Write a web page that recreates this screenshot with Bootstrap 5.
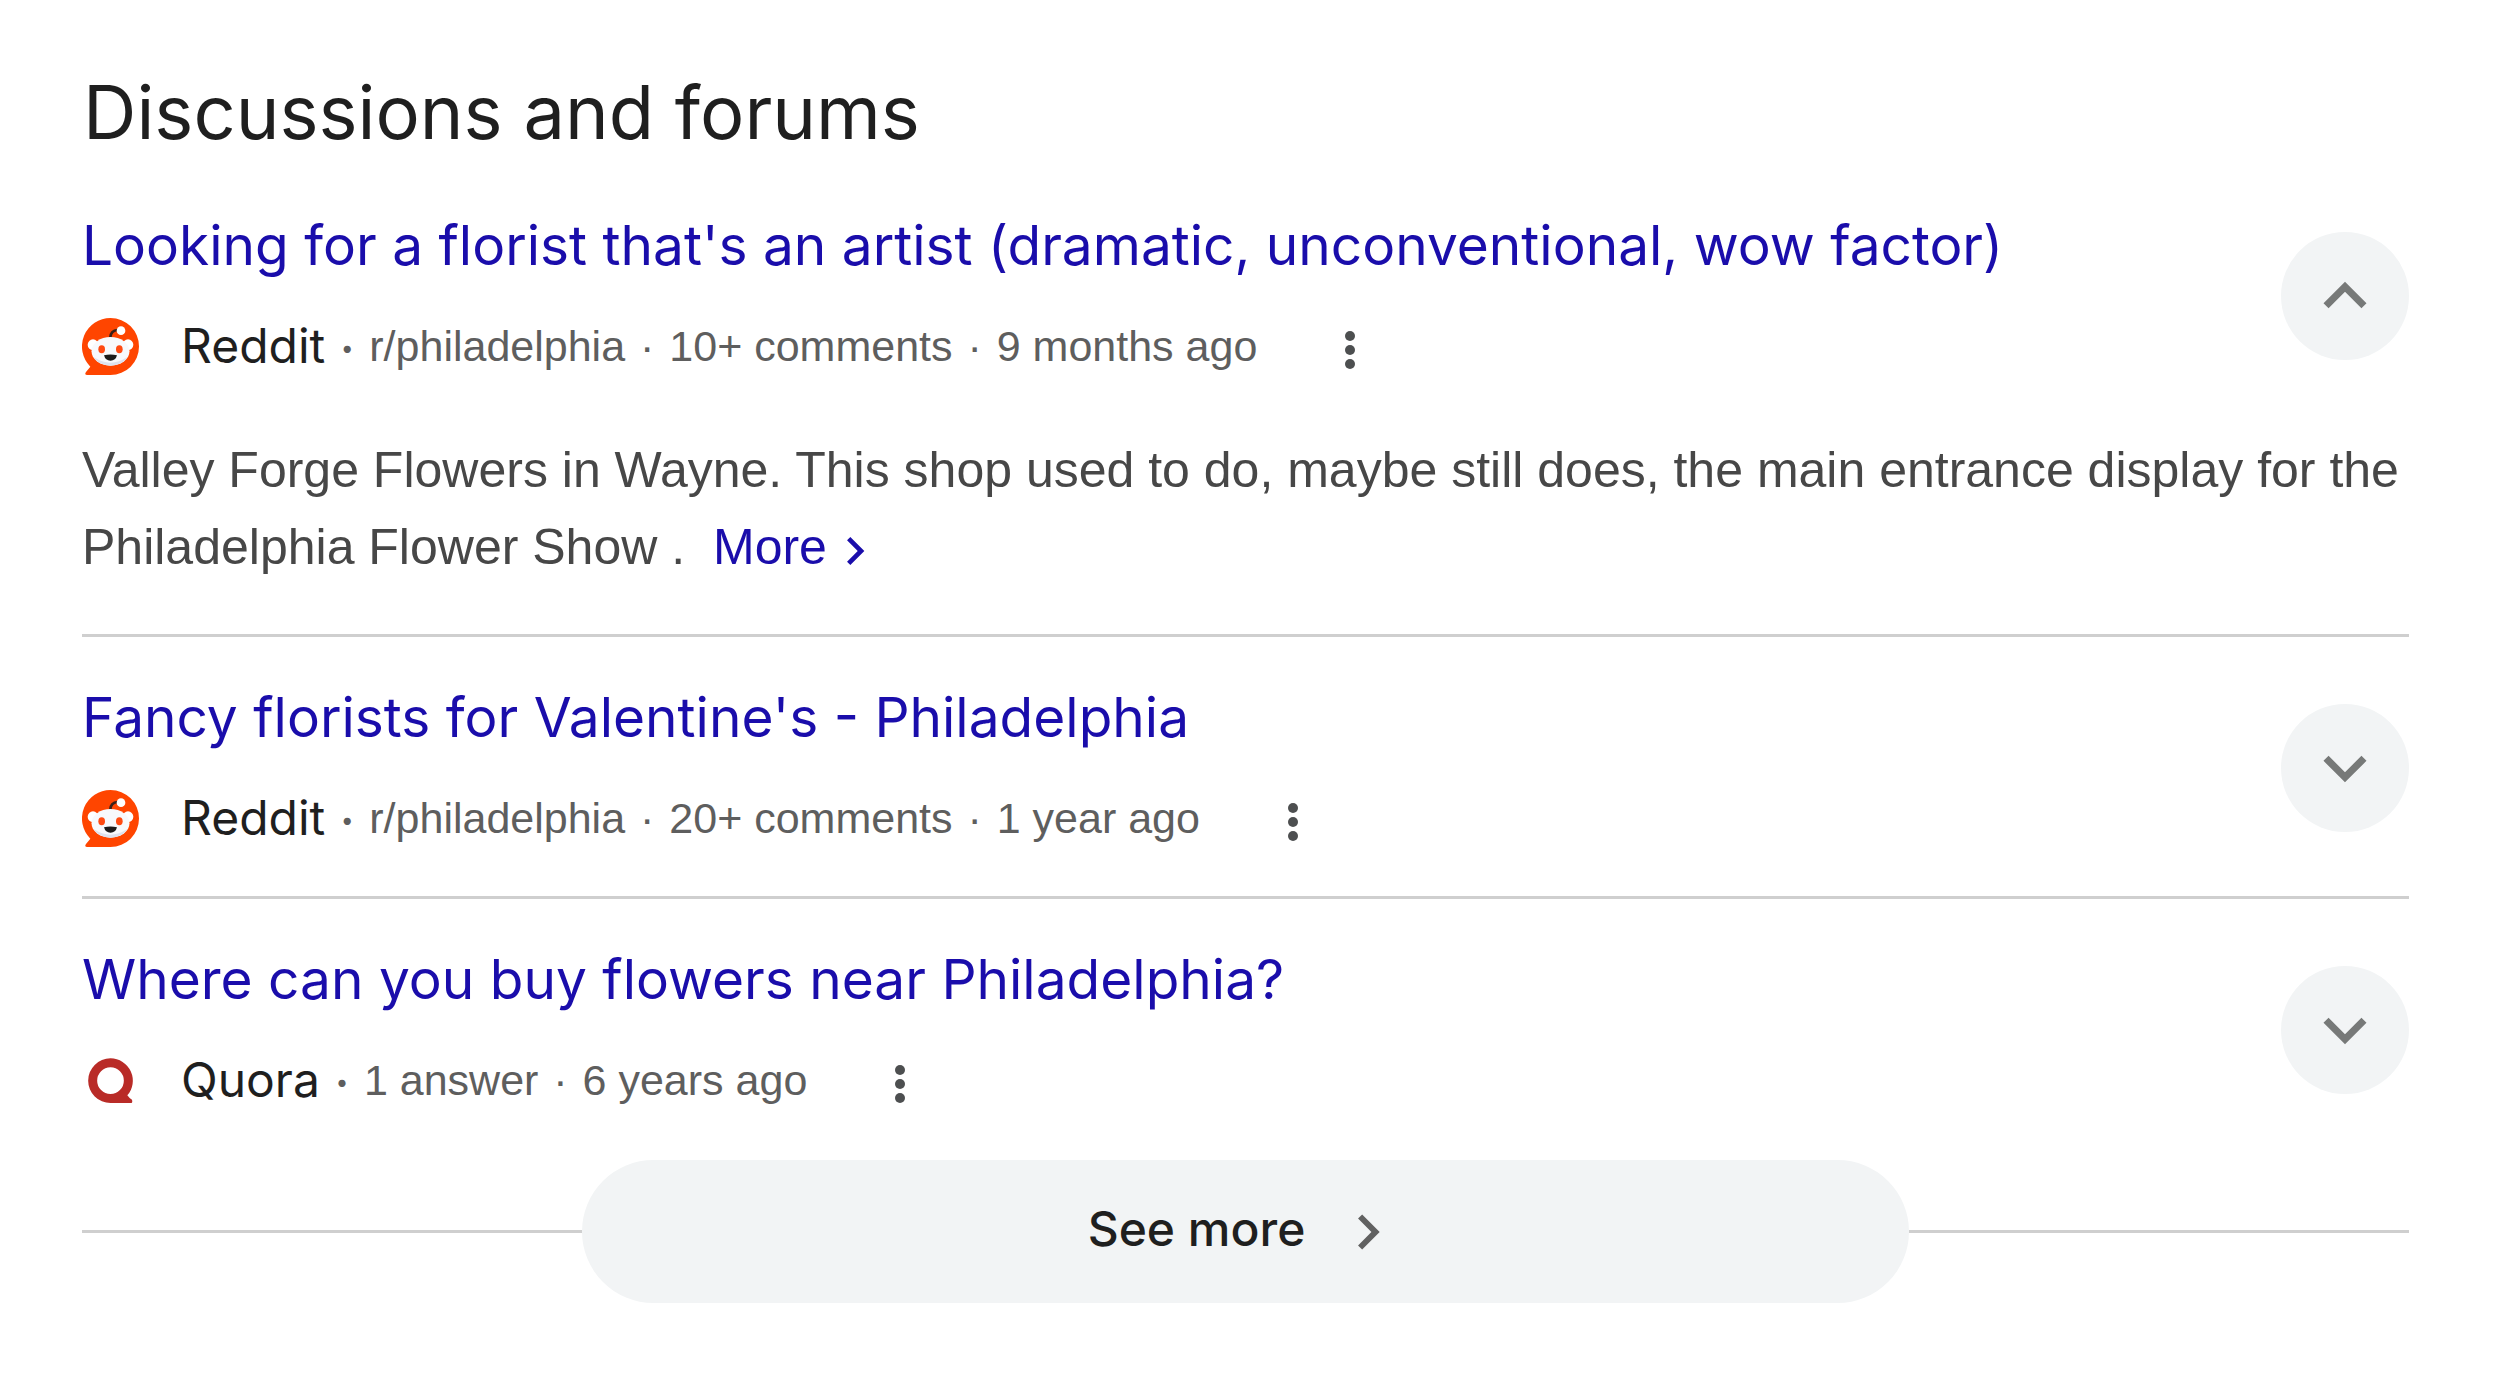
<!DOCTYPE html>
<html lang="en">
<head>
<meta charset="utf-8">
<meta name="viewport" content="width=device-width, initial-scale=1">
<title>Discussions and forums</title>
<link href="https://cdn.jsdelivr.net/npm/bootstrap@5.3.0/dist/css/bootstrap.min.css" rel="stylesheet">
<style>
  :root { --ink: #1f1f1f; --link: #1a0dab; --muted: #5e5e5e; --soft: #f2f4f5; --rule: #cfcfcf; }
  body { font-family: "Liberation Sans", Arial, sans-serif; color: var(--ink); background: #fff; }
  .forums { padding: 67px 91px 67px 82px; }
  .forums-title { font: 400 74px/90px Inter, sans-serif; margin: 0 0 53px 1px; }
  .thread { padding-bottom: 48px; }
  .thread + .thread { border-top: 3px solid var(--rule); padding-top: 45px; }
  .thread:last-child { padding-bottom: 50px; }
  .thread-title { font: 400 55px/70px Inter, sans-serif; margin: 0 0 36px; }
  .thread-title a, .more-link { color: var(--link); text-decoration: none; }
  .thread-title a:hover, .more-link:hover { text-decoration: underline; }
  .meta-line { line-height: 60px; font-size: 43px; color: var(--muted); }
  .favicon { width: 57px; height: 57px; margin-right: 42px; flex: none; }
  .source { font: 400 48px/60px Inter, sans-serif; color: var(--ink); }
  .source-dot { font: 400 48px/60px Lato, sans-serif; width: 44px; text-align: center; }
  .sep { margin: 0 3px; }
  .kebab { margin-left: 73px; width: 40px; height: 60px; color: #4d4f50; }
  .snippet { font-size: 50px; line-height: 77px; color: #474747; margin: 56px 0 0; }
  .more-link { margin-left: 14px; white-space: nowrap; }
  .more-link svg { width: 56px; height: 56px; }
  .toggle { width: 128px; height: 128px; margin-top: 22px; background: var(--soft); color: #777978; flex: none; }
  .toggle svg { width: 86px; height: 86px; }
  .rule-line { height: 3px; background: var(--rule); }
  .see-more { width: 57%; height: 143px; background: var(--soft); font: 500 48px/60px Inter, sans-serif; color: var(--ink); gap: 28px; }
  .see-more span { padding-bottom: 6px; }
  .see-more svg { width: 70px; height: 70px; color: #616161; }
  .btn-bare:hover { filter: brightness(.96); }
</style>
<script src="https://cdn.jsdelivr.net/npm/bootstrap@5.3.0/dist/js/bootstrap.bundle.min.js"></script>
</head>
<body>
<svg class="d-none" aria-hidden="true">
  <symbol id="reddit" viewBox="0 0 171 171">
    <path fill="#ff4500" d="M85.500 0A85.500 85.500 0 0 1 85.500 171H16q-10 0-4-9L25 146A85.500 85.500 0 0 1 85.500 0z"/>
    <path fill="none" stroke="#3a2018" stroke-width="8" d="M85 58q1-20 22-22"/>
    <circle cx="117" cy="38" r="13" fill="#fff"/>
    <circle cx="33" cy="80" r="16" fill="#fff"/><circle cx="138" cy="80" r="16" fill="#fff"/>
    <ellipse cx="85.500" cy="100" rx="57" ry="43" fill="#f8f9fc"/>
    <path fill="#dde2ee" d="M36 118Q85 150 135 118Q121 143 85.500 143Q50 143 36 118z"/>
    <ellipse cx="59" cy="94" rx="10" ry="12" fill="#ff4a12"/><ellipse cx="112" cy="94" rx="10" ry="12" fill="#ff4a12"/>
    <path fill="#1c1c1c" d="M66 112Q85 107 105 112Q101 128 85.500 128Q70 128 66 112z"/>
  </symbol>
  <symbol id="quora" viewBox="0 0 171 171">
    <path fill="#b92b27" fill-rule="evenodd" d="M85.500 19A67 67 0 0 1 136 130Q142 139 150 143Q153 153 146 153H85.500A67 67 0 0 1 85.500 19zM85.500 46A40 40 0 1 0 85.500 126A40 40 0 0 0 85.500 46z"/>
  </symbol>
  <symbol id="dots" viewBox="0 0 40 60">
    <g fill="currentColor"><circle cx="20" cy="20" r="5"/><circle cx="20" cy="34" r="5"/><circle cx="20" cy="48" r="5"/></g>
  </symbol>
  <symbol id="up" viewBox="0 0 24 24"><path fill="currentColor" d="M12 8l-6 6 1.410 1.410L12 10.830l4.590 4.580L18 14z"/></symbol>
  <symbol id="down" viewBox="0 0 24 24"><path fill="currentColor" d="M16.590 8.590L12 13.170 7.410 8.590 6 10l6 6 6-6z"/></symbol>
  <symbol id="right" viewBox="0 0 24 24"><path fill="currentColor" d="M10 6L8.590 7.410 13.170 12l-4.580 4.590L10 18l6-6z"/></symbol>
</svg>

<main class="forums">
  <h1 class="forums-title">Discussions and forums</h1>

  <section>
    <article class="thread">
      <div class="d-flex justify-content-between align-items-start">
        <div>
          <h2 class="thread-title"><a href="#">Looking for a florist that's an artist (dramatic, unconventional, wow factor)</a></h2>
          <div class="meta-line d-flex align-items-center">
            <svg class="favicon" aria-hidden="true"><use href="#reddit"/></svg>
            <span class="source">Reddit</span><span class="source-dot">·</span>
            <span>r/philadelphia<span class="sep"> · </span>10+ comments<span class="sep"> · </span>9 months ago</span>
            <button type="button" class="btn btn-bare kebab border-0 p-0 d-flex" aria-label="About this result"><svg class="w-100 h-100"><use href="#dots"/></svg></button>
          </div>
        </div>
        <button type="button" class="btn btn-bare toggle rounded-circle border-0 p-0 d-flex align-items-center justify-content-center" aria-label="Collapse" aria-expanded="true"><svg><use href="#up"/></svg></button>
      </div>
      <p class="snippet">Valley Forge Flowers in Wayne. This shop used to do, maybe still does, the main entrance display for the Philadelphia Flower Show . <a class="more-link" href="#">More<svg aria-hidden="true"><use href="#right"/></svg></a></p>
    </article>

    <article class="thread">
      <div class="d-flex justify-content-between align-items-start">
        <div>
          <h2 class="thread-title"><a href="#">Fancy florists for Valentine's - Philadelphia</a></h2>
          <div class="meta-line d-flex align-items-center">
            <svg class="favicon" aria-hidden="true"><use href="#reddit"/></svg>
            <span class="source">Reddit</span><span class="source-dot">·</span>
            <span>r/philadelphia<span class="sep"> · </span>20+ comments<span class="sep"> · </span>1 year ago</span>
            <button type="button" class="btn btn-bare kebab border-0 p-0 d-flex" aria-label="About this result"><svg class="w-100 h-100"><use href="#dots"/></svg></button>
          </div>
        </div>
        <button type="button" class="btn btn-bare toggle rounded-circle border-0 p-0 d-flex align-items-center justify-content-center" aria-label="Expand" aria-expanded="false"><svg><use href="#down"/></svg></button>
      </div>
    </article>

    <article class="thread">
      <div class="d-flex justify-content-between align-items-start">
        <div>
          <h2 class="thread-title"><a href="#">Where can you buy flowers near Philadelphia?</a></h2>
          <div class="meta-line d-flex align-items-center">
            <svg class="favicon" aria-hidden="true"><use href="#quora"/></svg>
            <span class="source">Quora</span><span class="source-dot">·</span>
            <span>1 answer<span class="sep"> · </span>6 years ago</span>
            <button type="button" class="btn btn-bare kebab border-0 p-0 d-flex" aria-label="About this result"><svg class="w-100 h-100"><use href="#dots"/></svg></button>
          </div>
        </div>
        <button type="button" class="btn btn-bare toggle rounded-circle border-0 p-0 d-flex align-items-center justify-content-center" aria-label="Expand" aria-expanded="false"><svg><use href="#down"/></svg></button>
      </div>
    </article>
  </section>

  <div class="d-flex align-items-center">
    <div class="rule-line flex-fill"></div>
    <button type="button" class="btn btn-bare see-more rounded-pill border-0 p-0 d-flex align-items-center justify-content-center"><span>See more</span><svg aria-hidden="true"><use href="#right"/></svg></button>
    <div class="rule-line flex-fill"></div>
  </div>
</main>
</body>
</html>
